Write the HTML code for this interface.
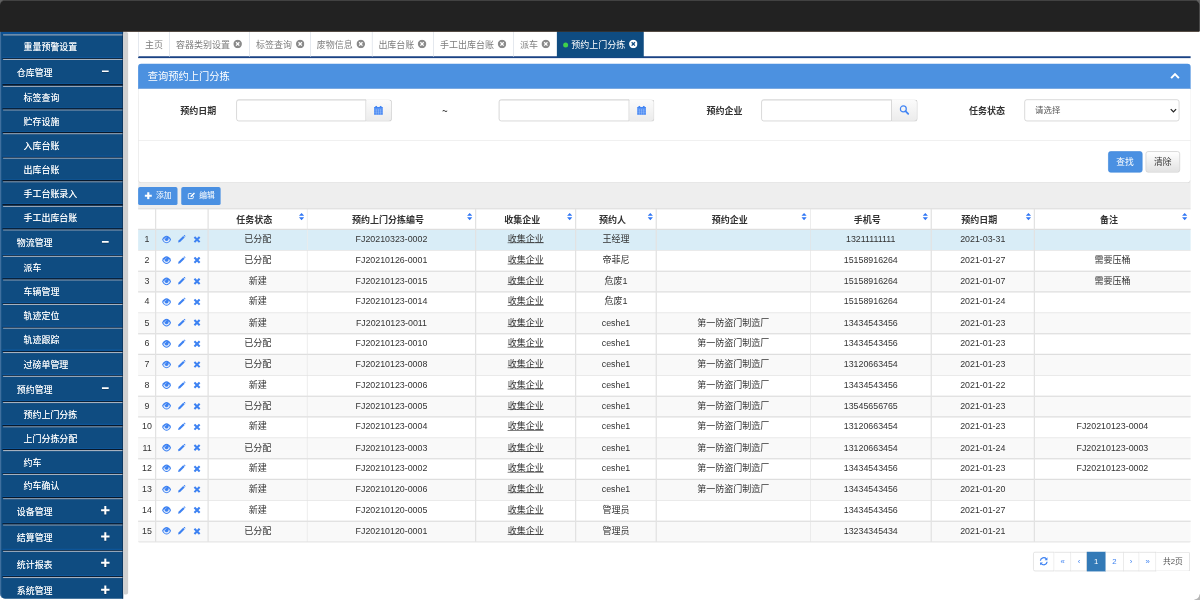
<!DOCTYPE html>
<html lang="zh-CN">
<head>
<meta charset="utf-8">
<title>预约上门分拣</title>
<style>
html,body{margin:0;padding:0;background:#fff;overflow:hidden;width:1200px;height:600px}
#app{position:absolute;left:0;top:0;width:1920px;height:960px;transform:scale(.625);transform-origin:0 0;overflow:hidden;
 font-family:"Liberation Sans","Noto Sans CJK SC",sans-serif;font-size:14px;color:#333;line-height:20px;background:#fff}
#app *{box-sizing:border-box}
svg{display:block}
i{font-style:normal;display:inline-block}
.navbg{z-index:4;position:absolute;left:0;top:0;width:1920px;height:50.4px;background:#626262}
.nav{z-index:5;position:absolute;left:0;top:0;width:1918.5px;height:50.72px;background:#222;border-top:1.6px solid #484848;border-bottom:1px solid #2a1708;border-radius:8px 8px 0 0}
.side{position:absolute;left:0;top:0;width:196.64px;height:958.08px;background:#0f4c81;border-left:2px solid #3f6f9e;border-radius:0 0 0 8px}
.sedge{position:absolute;left:195.52px;top:50.72px;width:1.28px;height:907.36px;background:#0a2748}
.side:before{content:"";position:absolute;left:0;top:50.72px;width:100%;height:4.16px;background:#0d5296}
.sbar{position:absolute;left:196.8px;top:51.2px;width:8.0px;height:900.16px;background:#d0d0d0;border-radius:3px}
.si:before{content:"";position:absolute;left:1px;right:0;top:0;height:2px;background:linear-gradient(#a6b1bf 70%,#5c7d9e)}
.si+.si:after{content:"";position:absolute;left:0;right:0;top:-3.2px;height:3.2px;background:linear-gradient(#0d5598 0,#0d5598 45%,#07182c 55%,#07182c 100%)}
.si{position:absolute;left:2px;right:0;color:#fff;white-space:nowrap;font-size:14.3px;text-shadow:0 0 1px rgba(255,255,255,.7)}
.si.sub{padding-left:33.8px}
.si.hdr{padding-left:22.88px}
.sic{position:absolute;right:20.34px;top:50%;margin-top:-8.7px;width:15px;height:15px;filter:drop-shadow(0 1px 0 rgba(0,0,0,.35));display:flex;align-items:center;justify-content:center}
.tabs{position:absolute;left:221.28px;top:50.4px;width:1683.68px;height:43.04px;border-bottom:3px solid #1b4384}
.tab{position:absolute;top:50.4px;height:40.16px;border-left:1.3px solid #d4dae4;color:#7e7e7e;line-height:43.24px;padding-left:9.7px;white-space:nowrap;font-size:14.4px}
.tab.active{background:#0f4c81;color:#fff;border-left:none;height:41.44px}
.tab .cl{vertical-align:middle;margin-left:5.5px;position:relative;top:-2.5px}
.tab .dot{width:8px;height:8px;border-radius:50%;background:#3fd14a;vertical-align:middle;margin-right:5px;position:relative;top:-1px}
.tab.active{padding-left:10px}
.ph{position:absolute;left:221.28px;top:102.4px;width:1683.68px;height:40.48px;background:#4c91e0;border-radius:5px 5px 0 0;color:#fff;font-size:16.4px;line-height:40.68px;padding-left:15.2px;border-bottom:2px solid #3b7fd0}
.ph i{position:absolute;right:16.8px;top:13px}
.pb{position:absolute;left:221.28px;top:141.76px;width:1683.68px;height:151.04px;border:1.6px solid #ddd;border-bottom-color:#d2d2d2;border-top:none;background:#fff;border-radius:0 0 6px 6px;z-index:2}
.pf,.lab,.inp,.iad,.select,.btn{z-index:3}
.pf{position:absolute;left:221.28px;top:224.48px;width:1683.68px;height:1px;background:#e7e7e7}
.lab{position:absolute;top:159.72px;height:34.88px;line-height:34.88px;font-weight:bold;text-align:right;white-space:nowrap;font-size:14.4px}
.inp{position:absolute;top:158.72px;height:34.88px;border:1.4px solid #c4c4c4;border-radius:4px 0 0 4px;background:#fff;box-shadow:inset 0 1px 1px rgba(0,0,0,.075)}
.iad{position:absolute;top:158.72px;height:34.88px;width:40.32px;border:1.4px solid #c4c4c4;border-left:none;border-radius:0 5px 5px 0;background:linear-gradient(#fbfbfb,#ececec);box-shadow:0 1px 1px rgba(0,0,0,.08);display:flex;align-items:center;justify-content:center}
.sel{}
.select{position:absolute;top:158.72px;height:34.88px;border:1.4px solid #c4c4c4;border-radius:4px;background:#fff;line-height:32.88px;padding-left:16px;color:#555;font-size:13.5px}
.select i{position:absolute;right:3px;top:13px}
.btn{position:absolute;border-radius:4px;text-align:center;white-space:nowrap}
.bp{background:#4a90e2;color:#fff;border:1px solid #3f86da}
.bd{background:linear-gradient(#fff,#e2e2e2);color:#333;border:1.3px solid #c6c6c6}
.tool{position:absolute;left:221.28px;top:288.0px;width:1683.68px;height:45.28px;background:#eee}
.bs{font-size:12.4px;color:#fff;background:#4a90e2;border-radius:3px;height:28.96px;line-height:28.96px;top:298.72px;display:flex;align-items:center;justify-content:center}
.bs i{margin-right:6px}
table{position:absolute;left:221.28px;top:333.28px;width:1683.68px;border-collapse:collapse;table-layout:fixed}
th,td{height:33.34px;padding:0;border:none;text-align:center;vertical-align:middle;white-space:nowrap;overflow:hidden;line-height:20px;font-size:14px}
th{font-weight:bold;position:relative;font-size:14.4px;padding-right:11px;padding-top:2px}
.gl{position:absolute;background:#dedede}
.gv{background:#e2e2e2}
.gb{background:#e6e6e6;border-radius:0 0 4px 4px}
td{padding-bottom:1.6px;font-size:14.15px}
td.c{font-size:14.45px}
tr.odd td{background:#f9f9f9}
tr.sel td{background:#d9edf7}
.srt{position:absolute;right:5px;top:7px}
td.act{position:relative}
td.act i{position:absolute;top:50%}
.a1{left:9.780000000000001px;margin-top:-7.4px}
.a2{left:35.1px;margin-top:-6.8px}
.a3{left:59.989999999999995px;margin-top:-6.2px}
u{text-decoration:underline;text-decoration-thickness:1px;text-underline-offset:0.5px}
.pg{position:absolute;top:883.2px;height:30.4px;border:1.4px solid #d6d6d6;margin-left:0;color:#3d82f2;font-size:12.4px;line-height:28.4px;text-align:center;background:#fff;display:flex;align-items:center;justify-content:center}
.pg+.pg{border-left:none}
.pg.first{border-radius:3px 0 0 3px}
.pg.last{border-radius:0 3px 3px 0}
.pg.on{background:#337ab7;border-color:#337ab7;color:#fff}
.pg.tot{color:#555}
.corner{position:absolute;right:0;bottom:0;width:9px;height:9px;background:#b5b5b5}
.corner:after{content:"";position:absolute;right:1.5px;bottom:1.5px;width:12px;height:12px;background:#fff;border-radius:0 0 8px 0}
</style>
</head>
<body>
<div id="app">
<div class="navbg"></div><div class="nav"></div>
<div class="side">
<div class="si sub" style="top:54.88px;height:39.52px;line-height:41.62px">重量预警设置</div>
<div class="si hdr" style="top:94.4px;height:42.13px;line-height:45.23px">仓库管理<span class="sic"><svg width="13" height="12" viewBox="0 0 12 12" style=""><path d="M0.6 6 H11.4" stroke="#fff" stroke-width="2.6" fill="none"/></svg></span></div>
<div class="si sub" style="top:136.53px;height:38.4px;line-height:40.5px">标签查询</div>
<div class="si sub" style="top:174.93px;height:38.4px;line-height:40.5px">贮存设施</div>
<div class="si sub" style="top:213.33px;height:38.4px;line-height:40.5px">入库台账</div>
<div class="si sub" style="top:251.73px;height:38.4px;line-height:40.5px">出库台账</div>
<div class="si sub" style="top:290.13px;height:38.4px;line-height:40.5px">手工台账录入</div>
<div class="si sub" style="top:328.53px;height:38.4px;line-height:40.5px">手工出库台账</div>
<div class="si hdr" style="top:366.93px;height:42.13px;line-height:45.23px">物流管理<span class="sic"><svg width="13" height="12" viewBox="0 0 12 12" style=""><path d="M0.6 6 H11.4" stroke="#fff" stroke-width="2.6" fill="none"/></svg></span></div>
<div class="si sub" style="top:409.06px;height:38.4px;line-height:40.5px">派车</div>
<div class="si sub" style="top:447.46px;height:38.4px;line-height:40.5px">车辆管理</div>
<div class="si sub" style="top:485.86px;height:38.4px;line-height:40.5px">轨迹定位</div>
<div class="si sub" style="top:524.26px;height:38.4px;line-height:40.5px">轨迹跟踪</div>
<div class="si sub" style="top:562.66px;height:38.4px;line-height:40.5px">过磅单管理</div>
<div class="si hdr" style="top:601.06px;height:42.13px;line-height:45.23px">预约管理<span class="sic"><svg width="13" height="12" viewBox="0 0 12 12" style=""><path d="M0.6 6 H11.4" stroke="#fff" stroke-width="2.6" fill="none"/></svg></span></div>
<div class="si sub" style="top:643.18px;height:38.4px;line-height:40.5px">预约上门分拣</div>
<div class="si sub" style="top:681.58px;height:38.4px;line-height:40.5px">上门分拣分配</div>
<div class="si sub" style="top:719.98px;height:38.4px;line-height:40.5px">约车</div>
<div class="si sub" style="top:758.38px;height:38.4px;line-height:40.5px">约车确认</div>
<div class="si hdr" style="top:796.78px;height:42.13px;line-height:45.23px">设备管理<span class="sic"><svg width="15" height="15" viewBox="0 0 12 12" style=""><path d="M6 0.6 V11.4 M0.6 6 H11.4" stroke="#fff" stroke-width="2.6" fill="none"/></svg></span></div>
<div class="si hdr" style="top:838.91px;height:42.13px;line-height:45.23px">结算管理<span class="sic"><svg width="15" height="15" viewBox="0 0 12 12" style=""><path d="M6 0.6 V11.4 M0.6 6 H11.4" stroke="#fff" stroke-width="2.6" fill="none"/></svg></span></div>
<div class="si hdr" style="top:881.04px;height:42.13px;line-height:45.23px">统计报表<span class="sic"><svg width="15" height="15" viewBox="0 0 12 12" style=""><path d="M6 0.6 V11.4 M0.6 6 H11.4" stroke="#fff" stroke-width="2.6" fill="none"/></svg></span></div>
<div class="si hdr" style="top:923.17px;height:42.13px;line-height:45.23px">系统管理<span class="sic"><svg width="15" height="15" viewBox="0 0 12 12" style=""><path d="M6 0.6 V11.4 M0.6 6 H11.4" stroke="#fff" stroke-width="2.6" fill="none"/></svg></span></div>
</div>
<div class="sedge"></div><div class="sbar"></div>
<div class="tabs"></div>
<div class="tab" style="left:221.28px;width:49.6px"><span>主页</span></div>
<div class="tab" style="left:270.88px;width:128.0px"><span>容器类别设置</span><i class="cl"><svg width="14.6" height="14.6" viewBox="0 0 16 16" style=""><circle cx="8" cy="8" r="7.4" fill="#8a8a8a"/><path d="M5.1 5.1 L10.9 10.9 M10.9 5.1 L5.1 10.9" stroke="#fff" stroke-width="2.3" stroke-linecap="butt" fill="none"/></svg></i></div>
<div class="tab" style="left:398.88px;width:97.12px"><span>标签查询</span><i class="cl"><svg width="14.6" height="14.6" viewBox="0 0 16 16" style=""><circle cx="8" cy="8" r="7.4" fill="#8a8a8a"/><path d="M5.1 5.1 L10.9 10.9 M10.9 5.1 L5.1 10.9" stroke="#fff" stroke-width="2.3" stroke-linecap="butt" fill="none"/></svg></i></div>
<div class="tab" style="left:496.0px;width:98.72px"><span>废物信息</span><i class="cl"><svg width="14.6" height="14.6" viewBox="0 0 16 16" style=""><circle cx="8" cy="8" r="7.4" fill="#8a8a8a"/><path d="M5.1 5.1 L10.9 10.9 M10.9 5.1 L5.1 10.9" stroke="#fff" stroke-width="2.3" stroke-linecap="butt" fill="none"/></svg></i></div>
<div class="tab" style="left:594.72px;width:98.56px"><span>出库台账</span><i class="cl"><svg width="14.6" height="14.6" viewBox="0 0 16 16" style=""><circle cx="8" cy="8" r="7.4" fill="#8a8a8a"/><path d="M5.1 5.1 L10.9 10.9 M10.9 5.1 L5.1 10.9" stroke="#fff" stroke-width="2.3" stroke-linecap="butt" fill="none"/></svg></i></div>
<div class="tab" style="left:693.28px;width:128.0px"><span>手工出库台账</span><i class="cl"><svg width="14.6" height="14.6" viewBox="0 0 16 16" style=""><circle cx="8" cy="8" r="7.4" fill="#8a8a8a"/><path d="M5.1 5.1 L10.9 10.9 M10.9 5.1 L5.1 10.9" stroke="#fff" stroke-width="2.3" stroke-linecap="butt" fill="none"/></svg></i></div>
<div class="tab" style="left:821.28px;width:69.76px"><span>派车</span><i class="cl"><svg width="14.6" height="14.6" viewBox="0 0 16 16" style=""><circle cx="8" cy="8" r="7.4" fill="#8a8a8a"/><path d="M5.1 5.1 L10.9 10.9 M10.9 5.1 L5.1 10.9" stroke="#fff" stroke-width="2.3" stroke-linecap="butt" fill="none"/></svg></i></div>
<div class="tab active" style="left:891.04px;width:138.72px"><i class="dot"></i><span>预约上门分拣</span><i class="cl"><svg width="14.6" height="14.6" viewBox="0 0 16 16" style=""><circle cx="8" cy="8" r="7.4" fill="#fff"/><path d="M5.1 5.1 L10.9 10.9 M10.9 5.1 L5.1 10.9" stroke="#0f4c81" stroke-width="2.3" stroke-linecap="butt" fill="none"/></svg></i></div>
<div class="ph">查询预约上门分拣<i><svg width="16" height="12" viewBox="0 0 16 12" style=""><path d="M1.8 10 L8 3.6 L14.2 10" fill="none" stroke="#fff" stroke-width="3.2" stroke-linejoin="miter"/></svg></i></div>
<div class="pb"></div>
<div class="pf"></div>
<div class="lab" style="left:240.0px;width:106.08px">预约日期</div>
<div class="inp" style="left:377.6px;width:208.64px"></div>
<div class="iad" style="left:586.24px"><svg width="15" height="15" viewBox="0 0 14 14" style=""><path d="M0.5 2.2 h13 v11.3 h-13 Z" fill="#4285f4"/><rect x="2.6" y="0.3" width="2.2" height="3.4" rx="0.8" fill="#4285f4"/><rect x="9.2" y="0.3" width="2.2" height="3.4" rx="0.8" fill="#4285f4"/><path d="M0.5 5 h13 M0.5 7.9 h13 M0.5 10.7 h13 M3.8 5 v8.5 M7 5 v8.5 M10.2 5 v8.5" stroke="#dde9fa" stroke-width="0.55" opacity="0.8" fill="none"/></svg></div>
<div class="lab" style="left:656.96px;width:109.76px;text-align:center">~</div>
<div class="inp" style="left:798.4px;width:208.64px"></div>
<div class="iad" style="left:1007.04px"><svg width="15" height="15" viewBox="0 0 14 14" style=""><path d="M0.5 2.2 h13 v11.3 h-13 Z" fill="#4285f4"/><rect x="2.6" y="0.3" width="2.2" height="3.4" rx="0.8" fill="#4285f4"/><rect x="9.2" y="0.3" width="2.2" height="3.4" rx="0.8" fill="#4285f4"/><path d="M0.5 5 h13 M0.5 7.9 h13 M0.5 10.7 h13 M3.8 5 v8.5 M7 5 v8.5 M10.2 5 v8.5" stroke="#dde9fa" stroke-width="0.55" opacity="0.8" fill="none"/></svg></div>
<div class="lab" style="left:1088.0px;width:100.0px">预约企业</div>
<div class="inp" style="left:1217.92px;width:209.12px"></div>
<div class="iad" style="left:1427.04px;width:40.96px"><svg width="15.5" height="15.5" viewBox="0 0 14 14" style=""><circle cx="5.7" cy="5.7" r="4.3" fill="none" stroke="#4285f4" stroke-width="1.8"/><path d="M8.9 8.9 L12.8 12.8" stroke="#4285f4" stroke-width="2.6" stroke-linecap="round"/></svg></div>
<div class="lab" style="left:1504.0px;width:103.84px">任务状态</div>
<div class="select" style="left:1639.04px;width:248.32px">请选择<i><svg width="11" height="8" viewBox="0 0 11 8" style=""><path d="M1.2 1.6 L5.5 6 L9.8 1.6" fill="none" stroke="#222" stroke-width="2"/></svg></i></div>
<div class="btn bp" style="left:1772.8px;top:241.6px;width:54.72px;height:34.4px;line-height:32.4px">查找</div>
<div class="btn bd" style="left:1832.96px;top:241.6px;width:54.72px;height:34.4px;line-height:32.4px">清除</div>
<div class="tool"></div>
<div class="btn bs" style="left:221.28px;width:62.88px"><i><svg width="12.5" height="12.5" viewBox="0 0 12 12" style=""><path d="M6 0.6 V11.4 M0.6 6 H11.4" stroke="#fff" stroke-width="3.3" fill="none"/></svg></i>添加</div>
<div class="btn bs" style="left:290.4px;width:62.4px"><i><svg width="13" height="12" viewBox="0 0 13 12" style=""><path d="M9.2 6.6 V9.4 Q9.2 10.9 7.7 10.9 H2.6 Q1.1 10.9 1.1 9.4 V4.2 Q1.1 2.7 2.6 2.7 H6.4" fill="none" stroke="#fff" stroke-width="1.5"/><path d="M4.6 8.2 L5 6.3 L10.3 1 L12 2.7 L6.6 8 Z" fill="#fff"/></svg></i>编辑</div>
<table>
<colgroup><col style="width:27.84px"><col style="width:84.16px"><col style="width:158.4px"><col style="width:269.44px"><col style="width:160.0px"><col style="width:128.96px"><col style="width:246.4px"><col style="width:193.6px"><col style="width:164.8px"><col style="width:250.08px"></colgroup>
<thead><tr><th></th><th></th><th>任务状态<i class="srt"><svg width="9" height="13" viewBox="0 0 9 13" style=""><path d="M0.3 5.3 L4.5 0.6 L8.7 5.3 Z M0.3 7.7 L4.5 12.4 L8.7 7.7 Z" fill="#2f76f5"/></svg></i></th><th>预约上门分拣编号<i class="srt"><svg width="9" height="13" viewBox="0 0 9 13" style=""><path d="M0.3 5.3 L4.5 0.6 L8.7 5.3 Z M0.3 7.7 L4.5 12.4 L8.7 7.7 Z" fill="#2f76f5"/></svg></i></th><th>收集企业<i class="srt"><svg width="9" height="13" viewBox="0 0 9 13" style=""><path d="M0.3 5.3 L4.5 0.6 L8.7 5.3 Z M0.3 7.7 L4.5 12.4 L8.7 7.7 Z" fill="#2f76f5"/></svg></i></th><th>预约人<i class="srt"><svg width="9" height="13" viewBox="0 0 9 13" style=""><path d="M0.3 5.3 L4.5 0.6 L8.7 5.3 Z M0.3 7.7 L4.5 12.4 L8.7 7.7 Z" fill="#2f76f5"/></svg></i></th><th>预约企业<i class="srt"><svg width="9" height="13" viewBox="0 0 9 13" style=""><path d="M0.3 5.3 L4.5 0.6 L8.7 5.3 Z M0.3 7.7 L4.5 12.4 L8.7 7.7 Z" fill="#2f76f5"/></svg></i></th><th>手机号<i class="srt"><svg width="9" height="13" viewBox="0 0 9 13" style=""><path d="M0.3 5.3 L4.5 0.6 L8.7 5.3 Z M0.3 7.7 L4.5 12.4 L8.7 7.7 Z" fill="#2f76f5"/></svg></i></th><th>预约日期<i class="srt"><svg width="9" height="13" viewBox="0 0 9 13" style=""><path d="M0.3 5.3 L4.5 0.6 L8.7 5.3 Z M0.3 7.7 L4.5 12.4 L8.7 7.7 Z" fill="#2f76f5"/></svg></i></th><th>备注<i class="srt"><svg width="9" height="13" viewBox="0 0 9 13" style=""><path d="M0.3 5.3 L4.5 0.6 L8.7 5.3 Z M0.3 7.7 L4.5 12.4 L8.7 7.7 Z" fill="#2f76f5"/></svg></i></th></tr></thead>
<tbody>
<tr class="sel"><td class="rn">1</td><td class="act"><i class="a1"><svg width="15" height="14.2" viewBox="0 0 15 13" preserveAspectRatio="none" style=""><path d="M0.3 6.7 C2.2 2.6 5 1 7.5 1 C10 1 12.8 2.6 14.7 6.7 C12.8 10.6 10 12.2 7.5 12.2 C5 12.2 2.2 10.6 0.3 6.7 Z" fill="#3d82f2"/><path d="M2.2 6.9 C3.4 9.4 5.6 10.8 7.5 10.8 C9.4 10.8 11.6 9.4 12.8 6.9 C12.2 5.8 11.5 5 10.7 4.4 C11.3 6.6 9.8 8.9 7.5 8.9 C5.2 8.9 3.7 6.6 4.3 4.4 C3.5 5 2.8 5.8 2.2 6.9 Z" fill="#fff" opacity="0.85"/><path d="M7.3 3.3 C6.3 3.4 5.6 4.2 5.6 5.2" fill="none" stroke="#fff" stroke-width="0.9" opacity="0.85"/></svg></i><i class="a2"><svg width="13" height="13" viewBox="0 0 14 14" style=""><path d="M1 13 L1.8 9.6 L9.8 1.6 L12.4 4.2 L4.4 12.2 Z" fill="#3d82f2"/><path d="M10.6 0.9 L11.4 0.2 Q12 -0.2 12.6 0.4 L13.6 1.4 Q14.2 2 13.7 2.6 L13.1 3.4 Z" fill="#3d82f2"/></svg></i><i class="a3"><svg width="12.5" height="12.5" viewBox="0 0 12 12" style=""><path d="M2 2 L10 10 M10 2 L2 10" stroke="#3d82f2" stroke-width="3.2" stroke-linecap="butt" fill="none"/></svg></i></td><td class="c">已分配</td><td>FJ20210323-0002</td><td class="c"><u>收集企业</u></td><td class="c">王经理</td><td></td><td>13211111111</td><td>2021-03-31</td><td></td></tr>
<tr class=""><td class="rn">2</td><td class="act"><i class="a1"><svg width="15" height="14.2" viewBox="0 0 15 13" preserveAspectRatio="none" style=""><path d="M0.3 6.7 C2.2 2.6 5 1 7.5 1 C10 1 12.8 2.6 14.7 6.7 C12.8 10.6 10 12.2 7.5 12.2 C5 12.2 2.2 10.6 0.3 6.7 Z" fill="#3d82f2"/><path d="M2.2 6.9 C3.4 9.4 5.6 10.8 7.5 10.8 C9.4 10.8 11.6 9.4 12.8 6.9 C12.2 5.8 11.5 5 10.7 4.4 C11.3 6.6 9.8 8.9 7.5 8.9 C5.2 8.9 3.7 6.6 4.3 4.4 C3.5 5 2.8 5.8 2.2 6.9 Z" fill="#fff" opacity="0.85"/><path d="M7.3 3.3 C6.3 3.4 5.6 4.2 5.6 5.2" fill="none" stroke="#fff" stroke-width="0.9" opacity="0.85"/></svg></i><i class="a2"><svg width="13" height="13" viewBox="0 0 14 14" style=""><path d="M1 13 L1.8 9.6 L9.8 1.6 L12.4 4.2 L4.4 12.2 Z" fill="#3d82f2"/><path d="M10.6 0.9 L11.4 0.2 Q12 -0.2 12.6 0.4 L13.6 1.4 Q14.2 2 13.7 2.6 L13.1 3.4 Z" fill="#3d82f2"/></svg></i><i class="a3"><svg width="12.5" height="12.5" viewBox="0 0 12 12" style=""><path d="M2 2 L10 10 M10 2 L2 10" stroke="#3d82f2" stroke-width="3.2" stroke-linecap="butt" fill="none"/></svg></i></td><td class="c">已分配</td><td>FJ20210126-0001</td><td class="c"><u>收集企业</u></td><td class="c">帝菲尼</td><td></td><td>15158916264</td><td>2021-01-27</td><td class="c">需要压桶</td></tr>
<tr class="odd"><td class="rn">3</td><td class="act"><i class="a1"><svg width="15" height="14.2" viewBox="0 0 15 13" preserveAspectRatio="none" style=""><path d="M0.3 6.7 C2.2 2.6 5 1 7.5 1 C10 1 12.8 2.6 14.7 6.7 C12.8 10.6 10 12.2 7.5 12.2 C5 12.2 2.2 10.6 0.3 6.7 Z" fill="#3d82f2"/><path d="M2.2 6.9 C3.4 9.4 5.6 10.8 7.5 10.8 C9.4 10.8 11.6 9.4 12.8 6.9 C12.2 5.8 11.5 5 10.7 4.4 C11.3 6.6 9.8 8.9 7.5 8.9 C5.2 8.9 3.7 6.6 4.3 4.4 C3.5 5 2.8 5.8 2.2 6.9 Z" fill="#fff" opacity="0.85"/><path d="M7.3 3.3 C6.3 3.4 5.6 4.2 5.6 5.2" fill="none" stroke="#fff" stroke-width="0.9" opacity="0.85"/></svg></i><i class="a2"><svg width="13" height="13" viewBox="0 0 14 14" style=""><path d="M1 13 L1.8 9.6 L9.8 1.6 L12.4 4.2 L4.4 12.2 Z" fill="#3d82f2"/><path d="M10.6 0.9 L11.4 0.2 Q12 -0.2 12.6 0.4 L13.6 1.4 Q14.2 2 13.7 2.6 L13.1 3.4 Z" fill="#3d82f2"/></svg></i><i class="a3"><svg width="12.5" height="12.5" viewBox="0 0 12 12" style=""><path d="M2 2 L10 10 M10 2 L2 10" stroke="#3d82f2" stroke-width="3.2" stroke-linecap="butt" fill="none"/></svg></i></td><td class="c">新建</td><td>FJ20210123-0015</td><td class="c"><u>收集企业</u></td><td class="c">危废1</td><td></td><td>15158916264</td><td>2021-01-07</td><td class="c">需要压桶</td></tr>
<tr class=""><td class="rn">4</td><td class="act"><i class="a1"><svg width="15" height="14.2" viewBox="0 0 15 13" preserveAspectRatio="none" style=""><path d="M0.3 6.7 C2.2 2.6 5 1 7.5 1 C10 1 12.8 2.6 14.7 6.7 C12.8 10.6 10 12.2 7.5 12.2 C5 12.2 2.2 10.6 0.3 6.7 Z" fill="#3d82f2"/><path d="M2.2 6.9 C3.4 9.4 5.6 10.8 7.5 10.8 C9.4 10.8 11.6 9.4 12.8 6.9 C12.2 5.8 11.5 5 10.7 4.4 C11.3 6.6 9.8 8.9 7.5 8.9 C5.2 8.9 3.7 6.6 4.3 4.4 C3.5 5 2.8 5.8 2.2 6.9 Z" fill="#fff" opacity="0.85"/><path d="M7.3 3.3 C6.3 3.4 5.6 4.2 5.6 5.2" fill="none" stroke="#fff" stroke-width="0.9" opacity="0.85"/></svg></i><i class="a2"><svg width="13" height="13" viewBox="0 0 14 14" style=""><path d="M1 13 L1.8 9.6 L9.8 1.6 L12.4 4.2 L4.4 12.2 Z" fill="#3d82f2"/><path d="M10.6 0.9 L11.4 0.2 Q12 -0.2 12.6 0.4 L13.6 1.4 Q14.2 2 13.7 2.6 L13.1 3.4 Z" fill="#3d82f2"/></svg></i><i class="a3"><svg width="12.5" height="12.5" viewBox="0 0 12 12" style=""><path d="M2 2 L10 10 M10 2 L2 10" stroke="#3d82f2" stroke-width="3.2" stroke-linecap="butt" fill="none"/></svg></i></td><td class="c">新建</td><td>FJ20210123-0014</td><td class="c"><u>收集企业</u></td><td class="c">危废1</td><td></td><td>15158916264</td><td>2021-01-24</td><td></td></tr>
<tr class="odd"><td class="rn">5</td><td class="act"><i class="a1"><svg width="15" height="14.2" viewBox="0 0 15 13" preserveAspectRatio="none" style=""><path d="M0.3 6.7 C2.2 2.6 5 1 7.5 1 C10 1 12.8 2.6 14.7 6.7 C12.8 10.6 10 12.2 7.5 12.2 C5 12.2 2.2 10.6 0.3 6.7 Z" fill="#3d82f2"/><path d="M2.2 6.9 C3.4 9.4 5.6 10.8 7.5 10.8 C9.4 10.8 11.6 9.4 12.8 6.9 C12.2 5.8 11.5 5 10.7 4.4 C11.3 6.6 9.8 8.9 7.5 8.9 C5.2 8.9 3.7 6.6 4.3 4.4 C3.5 5 2.8 5.8 2.2 6.9 Z" fill="#fff" opacity="0.85"/><path d="M7.3 3.3 C6.3 3.4 5.6 4.2 5.6 5.2" fill="none" stroke="#fff" stroke-width="0.9" opacity="0.85"/></svg></i><i class="a2"><svg width="13" height="13" viewBox="0 0 14 14" style=""><path d="M1 13 L1.8 9.6 L9.8 1.6 L12.4 4.2 L4.4 12.2 Z" fill="#3d82f2"/><path d="M10.6 0.9 L11.4 0.2 Q12 -0.2 12.6 0.4 L13.6 1.4 Q14.2 2 13.7 2.6 L13.1 3.4 Z" fill="#3d82f2"/></svg></i><i class="a3"><svg width="12.5" height="12.5" viewBox="0 0 12 12" style=""><path d="M2 2 L10 10 M10 2 L2 10" stroke="#3d82f2" stroke-width="3.2" stroke-linecap="butt" fill="none"/></svg></i></td><td class="c">新建</td><td>FJ20210123-0011</td><td class="c"><u>收集企业</u></td><td>ceshe1</td><td class="c">第一防盗门制造厂</td><td>13434543456</td><td>2021-01-23</td><td></td></tr>
<tr class=""><td class="rn">6</td><td class="act"><i class="a1"><svg width="15" height="14.2" viewBox="0 0 15 13" preserveAspectRatio="none" style=""><path d="M0.3 6.7 C2.2 2.6 5 1 7.5 1 C10 1 12.8 2.6 14.7 6.7 C12.8 10.6 10 12.2 7.5 12.2 C5 12.2 2.2 10.6 0.3 6.7 Z" fill="#3d82f2"/><path d="M2.2 6.9 C3.4 9.4 5.6 10.8 7.5 10.8 C9.4 10.8 11.6 9.4 12.8 6.9 C12.2 5.8 11.5 5 10.7 4.4 C11.3 6.6 9.8 8.9 7.5 8.9 C5.2 8.9 3.7 6.6 4.3 4.4 C3.5 5 2.8 5.8 2.2 6.9 Z" fill="#fff" opacity="0.85"/><path d="M7.3 3.3 C6.3 3.4 5.6 4.2 5.6 5.2" fill="none" stroke="#fff" stroke-width="0.9" opacity="0.85"/></svg></i><i class="a2"><svg width="13" height="13" viewBox="0 0 14 14" style=""><path d="M1 13 L1.8 9.6 L9.8 1.6 L12.4 4.2 L4.4 12.2 Z" fill="#3d82f2"/><path d="M10.6 0.9 L11.4 0.2 Q12 -0.2 12.6 0.4 L13.6 1.4 Q14.2 2 13.7 2.6 L13.1 3.4 Z" fill="#3d82f2"/></svg></i><i class="a3"><svg width="12.5" height="12.5" viewBox="0 0 12 12" style=""><path d="M2 2 L10 10 M10 2 L2 10" stroke="#3d82f2" stroke-width="3.2" stroke-linecap="butt" fill="none"/></svg></i></td><td class="c">已分配</td><td>FJ20210123-0010</td><td class="c"><u>收集企业</u></td><td>ceshe1</td><td class="c">第一防盗门制造厂</td><td>13434543456</td><td>2021-01-23</td><td></td></tr>
<tr class="odd"><td class="rn">7</td><td class="act"><i class="a1"><svg width="15" height="14.2" viewBox="0 0 15 13" preserveAspectRatio="none" style=""><path d="M0.3 6.7 C2.2 2.6 5 1 7.5 1 C10 1 12.8 2.6 14.7 6.7 C12.8 10.6 10 12.2 7.5 12.2 C5 12.2 2.2 10.6 0.3 6.7 Z" fill="#3d82f2"/><path d="M2.2 6.9 C3.4 9.4 5.6 10.8 7.5 10.8 C9.4 10.8 11.6 9.4 12.8 6.9 C12.2 5.8 11.5 5 10.7 4.4 C11.3 6.6 9.8 8.9 7.5 8.9 C5.2 8.9 3.7 6.6 4.3 4.4 C3.5 5 2.8 5.8 2.2 6.9 Z" fill="#fff" opacity="0.85"/><path d="M7.3 3.3 C6.3 3.4 5.6 4.2 5.6 5.2" fill="none" stroke="#fff" stroke-width="0.9" opacity="0.85"/></svg></i><i class="a2"><svg width="13" height="13" viewBox="0 0 14 14" style=""><path d="M1 13 L1.8 9.6 L9.8 1.6 L12.4 4.2 L4.4 12.2 Z" fill="#3d82f2"/><path d="M10.6 0.9 L11.4 0.2 Q12 -0.2 12.6 0.4 L13.6 1.4 Q14.2 2 13.7 2.6 L13.1 3.4 Z" fill="#3d82f2"/></svg></i><i class="a3"><svg width="12.5" height="12.5" viewBox="0 0 12 12" style=""><path d="M2 2 L10 10 M10 2 L2 10" stroke="#3d82f2" stroke-width="3.2" stroke-linecap="butt" fill="none"/></svg></i></td><td class="c">已分配</td><td>FJ20210123-0008</td><td class="c"><u>收集企业</u></td><td>ceshe1</td><td class="c">第一防盗门制造厂</td><td>13120663454</td><td>2021-01-23</td><td></td></tr>
<tr class=""><td class="rn">8</td><td class="act"><i class="a1"><svg width="15" height="14.2" viewBox="0 0 15 13" preserveAspectRatio="none" style=""><path d="M0.3 6.7 C2.2 2.6 5 1 7.5 1 C10 1 12.8 2.6 14.7 6.7 C12.8 10.6 10 12.2 7.5 12.2 C5 12.2 2.2 10.6 0.3 6.7 Z" fill="#3d82f2"/><path d="M2.2 6.9 C3.4 9.4 5.6 10.8 7.5 10.8 C9.4 10.8 11.6 9.4 12.8 6.9 C12.2 5.8 11.5 5 10.7 4.4 C11.3 6.6 9.8 8.9 7.5 8.9 C5.2 8.9 3.7 6.6 4.3 4.4 C3.5 5 2.8 5.8 2.2 6.9 Z" fill="#fff" opacity="0.85"/><path d="M7.3 3.3 C6.3 3.4 5.6 4.2 5.6 5.2" fill="none" stroke="#fff" stroke-width="0.9" opacity="0.85"/></svg></i><i class="a2"><svg width="13" height="13" viewBox="0 0 14 14" style=""><path d="M1 13 L1.8 9.6 L9.8 1.6 L12.4 4.2 L4.4 12.2 Z" fill="#3d82f2"/><path d="M10.6 0.9 L11.4 0.2 Q12 -0.2 12.6 0.4 L13.6 1.4 Q14.2 2 13.7 2.6 L13.1 3.4 Z" fill="#3d82f2"/></svg></i><i class="a3"><svg width="12.5" height="12.5" viewBox="0 0 12 12" style=""><path d="M2 2 L10 10 M10 2 L2 10" stroke="#3d82f2" stroke-width="3.2" stroke-linecap="butt" fill="none"/></svg></i></td><td class="c">新建</td><td>FJ20210123-0006</td><td class="c"><u>收集企业</u></td><td>ceshe1</td><td class="c">第一防盗门制造厂</td><td>13434543456</td><td>2021-01-22</td><td></td></tr>
<tr class="odd"><td class="rn">9</td><td class="act"><i class="a1"><svg width="15" height="14.2" viewBox="0 0 15 13" preserveAspectRatio="none" style=""><path d="M0.3 6.7 C2.2 2.6 5 1 7.5 1 C10 1 12.8 2.6 14.7 6.7 C12.8 10.6 10 12.2 7.5 12.2 C5 12.2 2.2 10.6 0.3 6.7 Z" fill="#3d82f2"/><path d="M2.2 6.9 C3.4 9.4 5.6 10.8 7.5 10.8 C9.4 10.8 11.6 9.4 12.8 6.9 C12.2 5.8 11.5 5 10.7 4.4 C11.3 6.6 9.8 8.9 7.5 8.9 C5.2 8.9 3.7 6.6 4.3 4.4 C3.5 5 2.8 5.8 2.2 6.9 Z" fill="#fff" opacity="0.85"/><path d="M7.3 3.3 C6.3 3.4 5.6 4.2 5.6 5.2" fill="none" stroke="#fff" stroke-width="0.9" opacity="0.85"/></svg></i><i class="a2"><svg width="13" height="13" viewBox="0 0 14 14" style=""><path d="M1 13 L1.8 9.6 L9.8 1.6 L12.4 4.2 L4.4 12.2 Z" fill="#3d82f2"/><path d="M10.6 0.9 L11.4 0.2 Q12 -0.2 12.6 0.4 L13.6 1.4 Q14.2 2 13.7 2.6 L13.1 3.4 Z" fill="#3d82f2"/></svg></i><i class="a3"><svg width="12.5" height="12.5" viewBox="0 0 12 12" style=""><path d="M2 2 L10 10 M10 2 L2 10" stroke="#3d82f2" stroke-width="3.2" stroke-linecap="butt" fill="none"/></svg></i></td><td class="c">已分配</td><td>FJ20210123-0005</td><td class="c"><u>收集企业</u></td><td>ceshe1</td><td class="c">第一防盗门制造厂</td><td>13545656765</td><td>2021-01-23</td><td></td></tr>
<tr class=""><td class="rn">10</td><td class="act"><i class="a1"><svg width="15" height="14.2" viewBox="0 0 15 13" preserveAspectRatio="none" style=""><path d="M0.3 6.7 C2.2 2.6 5 1 7.5 1 C10 1 12.8 2.6 14.7 6.7 C12.8 10.6 10 12.2 7.5 12.2 C5 12.2 2.2 10.6 0.3 6.7 Z" fill="#3d82f2"/><path d="M2.2 6.9 C3.4 9.4 5.6 10.8 7.5 10.8 C9.4 10.8 11.6 9.4 12.8 6.9 C12.2 5.8 11.5 5 10.7 4.4 C11.3 6.6 9.8 8.9 7.5 8.9 C5.2 8.9 3.7 6.6 4.3 4.4 C3.5 5 2.8 5.8 2.2 6.9 Z" fill="#fff" opacity="0.85"/><path d="M7.3 3.3 C6.3 3.4 5.6 4.2 5.6 5.2" fill="none" stroke="#fff" stroke-width="0.9" opacity="0.85"/></svg></i><i class="a2"><svg width="13" height="13" viewBox="0 0 14 14" style=""><path d="M1 13 L1.8 9.6 L9.8 1.6 L12.4 4.2 L4.4 12.2 Z" fill="#3d82f2"/><path d="M10.6 0.9 L11.4 0.2 Q12 -0.2 12.6 0.4 L13.6 1.4 Q14.2 2 13.7 2.6 L13.1 3.4 Z" fill="#3d82f2"/></svg></i><i class="a3"><svg width="12.5" height="12.5" viewBox="0 0 12 12" style=""><path d="M2 2 L10 10 M10 2 L2 10" stroke="#3d82f2" stroke-width="3.2" stroke-linecap="butt" fill="none"/></svg></i></td><td class="c">新建</td><td>FJ20210123-0004</td><td class="c"><u>收集企业</u></td><td>ceshe1</td><td class="c">第一防盗门制造厂</td><td>13120663454</td><td>2021-01-23</td><td>FJ20210123-0004</td></tr>
<tr class="odd"><td class="rn">11</td><td class="act"><i class="a1"><svg width="15" height="14.2" viewBox="0 0 15 13" preserveAspectRatio="none" style=""><path d="M0.3 6.7 C2.2 2.6 5 1 7.5 1 C10 1 12.8 2.6 14.7 6.7 C12.8 10.6 10 12.2 7.5 12.2 C5 12.2 2.2 10.6 0.3 6.7 Z" fill="#3d82f2"/><path d="M2.2 6.9 C3.4 9.4 5.6 10.8 7.5 10.8 C9.4 10.8 11.6 9.4 12.8 6.9 C12.2 5.8 11.5 5 10.7 4.4 C11.3 6.6 9.8 8.9 7.5 8.9 C5.2 8.9 3.7 6.6 4.3 4.4 C3.5 5 2.8 5.8 2.2 6.9 Z" fill="#fff" opacity="0.85"/><path d="M7.3 3.3 C6.3 3.4 5.6 4.2 5.6 5.2" fill="none" stroke="#fff" stroke-width="0.9" opacity="0.85"/></svg></i><i class="a2"><svg width="13" height="13" viewBox="0 0 14 14" style=""><path d="M1 13 L1.8 9.6 L9.8 1.6 L12.4 4.2 L4.4 12.2 Z" fill="#3d82f2"/><path d="M10.6 0.9 L11.4 0.2 Q12 -0.2 12.6 0.4 L13.6 1.4 Q14.2 2 13.7 2.6 L13.1 3.4 Z" fill="#3d82f2"/></svg></i><i class="a3"><svg width="12.5" height="12.5" viewBox="0 0 12 12" style=""><path d="M2 2 L10 10 M10 2 L2 10" stroke="#3d82f2" stroke-width="3.2" stroke-linecap="butt" fill="none"/></svg></i></td><td class="c">已分配</td><td>FJ20210123-0003</td><td class="c"><u>收集企业</u></td><td>ceshe1</td><td class="c">第一防盗门制造厂</td><td>13120663454</td><td>2021-01-24</td><td>FJ20210123-0003</td></tr>
<tr class=""><td class="rn">12</td><td class="act"><i class="a1"><svg width="15" height="14.2" viewBox="0 0 15 13" preserveAspectRatio="none" style=""><path d="M0.3 6.7 C2.2 2.6 5 1 7.5 1 C10 1 12.8 2.6 14.7 6.7 C12.8 10.6 10 12.2 7.5 12.2 C5 12.2 2.2 10.6 0.3 6.7 Z" fill="#3d82f2"/><path d="M2.2 6.9 C3.4 9.4 5.6 10.8 7.5 10.8 C9.4 10.8 11.6 9.4 12.8 6.9 C12.2 5.8 11.5 5 10.7 4.4 C11.3 6.6 9.8 8.9 7.5 8.9 C5.2 8.9 3.7 6.6 4.3 4.4 C3.5 5 2.8 5.8 2.2 6.9 Z" fill="#fff" opacity="0.85"/><path d="M7.3 3.3 C6.3 3.4 5.6 4.2 5.6 5.2" fill="none" stroke="#fff" stroke-width="0.9" opacity="0.85"/></svg></i><i class="a2"><svg width="13" height="13" viewBox="0 0 14 14" style=""><path d="M1 13 L1.8 9.6 L9.8 1.6 L12.4 4.2 L4.4 12.2 Z" fill="#3d82f2"/><path d="M10.6 0.9 L11.4 0.2 Q12 -0.2 12.6 0.4 L13.6 1.4 Q14.2 2 13.7 2.6 L13.1 3.4 Z" fill="#3d82f2"/></svg></i><i class="a3"><svg width="12.5" height="12.5" viewBox="0 0 12 12" style=""><path d="M2 2 L10 10 M10 2 L2 10" stroke="#3d82f2" stroke-width="3.2" stroke-linecap="butt" fill="none"/></svg></i></td><td class="c">新建</td><td>FJ20210123-0002</td><td class="c"><u>收集企业</u></td><td>ceshe1</td><td class="c">第一防盗门制造厂</td><td>13434543456</td><td>2021-01-23</td><td>FJ20210123-0002</td></tr>
<tr class="odd"><td class="rn">13</td><td class="act"><i class="a1"><svg width="15" height="14.2" viewBox="0 0 15 13" preserveAspectRatio="none" style=""><path d="M0.3 6.7 C2.2 2.6 5 1 7.5 1 C10 1 12.8 2.6 14.7 6.7 C12.8 10.6 10 12.2 7.5 12.2 C5 12.2 2.2 10.6 0.3 6.7 Z" fill="#3d82f2"/><path d="M2.2 6.9 C3.4 9.4 5.6 10.8 7.5 10.8 C9.4 10.8 11.6 9.4 12.8 6.9 C12.2 5.8 11.5 5 10.7 4.4 C11.3 6.6 9.8 8.9 7.5 8.9 C5.2 8.9 3.7 6.6 4.3 4.4 C3.5 5 2.8 5.8 2.2 6.9 Z" fill="#fff" opacity="0.85"/><path d="M7.3 3.3 C6.3 3.4 5.6 4.2 5.6 5.2" fill="none" stroke="#fff" stroke-width="0.9" opacity="0.85"/></svg></i><i class="a2"><svg width="13" height="13" viewBox="0 0 14 14" style=""><path d="M1 13 L1.8 9.6 L9.8 1.6 L12.4 4.2 L4.4 12.2 Z" fill="#3d82f2"/><path d="M10.6 0.9 L11.4 0.2 Q12 -0.2 12.6 0.4 L13.6 1.4 Q14.2 2 13.7 2.6 L13.1 3.4 Z" fill="#3d82f2"/></svg></i><i class="a3"><svg width="12.5" height="12.5" viewBox="0 0 12 12" style=""><path d="M2 2 L10 10 M10 2 L2 10" stroke="#3d82f2" stroke-width="3.2" stroke-linecap="butt" fill="none"/></svg></i></td><td class="c">新建</td><td>FJ20210120-0006</td><td class="c"><u>收集企业</u></td><td>ceshe1</td><td class="c">第一防盗门制造厂</td><td>13434543456</td><td>2021-01-20</td><td></td></tr>
<tr class=""><td class="rn">14</td><td class="act"><i class="a1"><svg width="15" height="14.2" viewBox="0 0 15 13" preserveAspectRatio="none" style=""><path d="M0.3 6.7 C2.2 2.6 5 1 7.5 1 C10 1 12.8 2.6 14.7 6.7 C12.8 10.6 10 12.2 7.5 12.2 C5 12.2 2.2 10.6 0.3 6.7 Z" fill="#3d82f2"/><path d="M2.2 6.9 C3.4 9.4 5.6 10.8 7.5 10.8 C9.4 10.8 11.6 9.4 12.8 6.9 C12.2 5.8 11.5 5 10.7 4.4 C11.3 6.6 9.8 8.9 7.5 8.9 C5.2 8.9 3.7 6.6 4.3 4.4 C3.5 5 2.8 5.8 2.2 6.9 Z" fill="#fff" opacity="0.85"/><path d="M7.3 3.3 C6.3 3.4 5.6 4.2 5.6 5.2" fill="none" stroke="#fff" stroke-width="0.9" opacity="0.85"/></svg></i><i class="a2"><svg width="13" height="13" viewBox="0 0 14 14" style=""><path d="M1 13 L1.8 9.6 L9.8 1.6 L12.4 4.2 L4.4 12.2 Z" fill="#3d82f2"/><path d="M10.6 0.9 L11.4 0.2 Q12 -0.2 12.6 0.4 L13.6 1.4 Q14.2 2 13.7 2.6 L13.1 3.4 Z" fill="#3d82f2"/></svg></i><i class="a3"><svg width="12.5" height="12.5" viewBox="0 0 12 12" style=""><path d="M2 2 L10 10 M10 2 L2 10" stroke="#3d82f2" stroke-width="3.2" stroke-linecap="butt" fill="none"/></svg></i></td><td class="c">新建</td><td>FJ20210120-0005</td><td class="c"><u>收集企业</u></td><td class="c">管理员</td><td></td><td>13434543456</td><td>2021-01-27</td><td></td></tr>
<tr class="odd"><td class="rn">15</td><td class="act"><i class="a1"><svg width="15" height="14.2" viewBox="0 0 15 13" preserveAspectRatio="none" style=""><path d="M0.3 6.7 C2.2 2.6 5 1 7.5 1 C10 1 12.8 2.6 14.7 6.7 C12.8 10.6 10 12.2 7.5 12.2 C5 12.2 2.2 10.6 0.3 6.7 Z" fill="#3d82f2"/><path d="M2.2 6.9 C3.4 9.4 5.6 10.8 7.5 10.8 C9.4 10.8 11.6 9.4 12.8 6.9 C12.2 5.8 11.5 5 10.7 4.4 C11.3 6.6 9.8 8.9 7.5 8.9 C5.2 8.9 3.7 6.6 4.3 4.4 C3.5 5 2.8 5.8 2.2 6.9 Z" fill="#fff" opacity="0.85"/><path d="M7.3 3.3 C6.3 3.4 5.6 4.2 5.6 5.2" fill="none" stroke="#fff" stroke-width="0.9" opacity="0.85"/></svg></i><i class="a2"><svg width="13" height="13" viewBox="0 0 14 14" style=""><path d="M1 13 L1.8 9.6 L9.8 1.6 L12.4 4.2 L4.4 12.2 Z" fill="#3d82f2"/><path d="M10.6 0.9 L11.4 0.2 Q12 -0.2 12.6 0.4 L13.6 1.4 Q14.2 2 13.7 2.6 L13.1 3.4 Z" fill="#3d82f2"/></svg></i><i class="a3"><svg width="12.5" height="12.5" viewBox="0 0 12 12" style=""><path d="M2 2 L10 10 M10 2 L2 10" stroke="#3d82f2" stroke-width="3.2" stroke-linecap="butt" fill="none"/></svg></i></td><td class="c">已分配</td><td>FJ20210120-0001</td><td class="c"><u>收集企业</u></td><td class="c">管理员</td><td></td><td>13234345434</td><td>2021-01-21</td><td></td></tr>
</tbody>
</table>
<div class="gl" style="left:221.28px;top:332.98px;width:1683.68px;height:1.6px"></div>
<div class="gl" style="left:221.28px;top:366.32px;width:1683.68px;height:1.6px"></div>
<div class="gl" style="left:221.28px;top:399.66px;width:1683.68px;height:1.6px"></div>
<div class="gl" style="left:221.28px;top:433.0px;width:1683.68px;height:1.6px"></div>
<div class="gl" style="left:221.28px;top:466.34px;width:1683.68px;height:1.6px"></div>
<div class="gl" style="left:221.28px;top:499.68px;width:1683.68px;height:1.6px"></div>
<div class="gl" style="left:221.28px;top:533.02px;width:1683.68px;height:1.6px"></div>
<div class="gl" style="left:221.28px;top:566.36px;width:1683.68px;height:1.6px"></div>
<div class="gl" style="left:221.28px;top:599.7px;width:1683.68px;height:1.6px"></div>
<div class="gl" style="left:221.28px;top:633.04px;width:1683.68px;height:1.6px"></div>
<div class="gl" style="left:221.28px;top:666.38px;width:1683.68px;height:1.6px"></div>
<div class="gl" style="left:221.28px;top:699.72px;width:1683.68px;height:1.6px"></div>
<div class="gl" style="left:221.28px;top:733.06px;width:1683.68px;height:1.6px"></div>
<div class="gl" style="left:221.28px;top:766.4px;width:1683.68px;height:1.6px"></div>
<div class="gl" style="left:221.28px;top:799.74px;width:1683.68px;height:1.6px"></div>
<div class="gl" style="left:221.28px;top:833.08px;width:1683.68px;height:1.6px"></div>
<div class="gl gb" style="left:221.28px;top:866.42px;width:1683.68px;height:1.6px"></div>
<div class="gl gv" style="left:248.32px;top:333.28px;width:1.6px;height:533.44px"></div>
<div class="gl gv" style="left:332.48px;top:333.28px;width:1.6px;height:533.44px"></div>
<div class="gl gv" style="left:490.88px;top:333.28px;width:1.6px;height:533.44px"></div>
<div class="gl gv" style="left:760.32px;top:333.28px;width:1.6px;height:533.44px"></div>
<div class="gl gv" style="left:920.32px;top:333.28px;width:1.6px;height:533.44px"></div>
<div class="gl gv" style="left:1049.28px;top:333.28px;width:1.6px;height:533.44px"></div>
<div class="gl gv" style="left:1295.68px;top:333.28px;width:1.6px;height:533.44px"></div>
<div class="gl gv" style="left:1489.28px;top:333.28px;width:1.6px;height:533.44px"></div>
<div class="gl gv" style="left:1654.08px;top:333.28px;width:1.6px;height:533.44px"></div>
<div class="pg first" style="left:1652.96px;width:34.08px"><svg width="14" height="14" viewBox="0 0 14 14" style=""><path d="M1.6 6.2 A5.5 5.5 0 0 1 11.2 3.2" fill="none" stroke="#3d82f2" stroke-width="2"/><path d="M12.9 0.6 V5.2 H8.3 Z" fill="#3d82f2"/><path d="M12.4 7.8 A5.5 5.5 0 0 1 2.8 10.8" fill="none" stroke="#3d82f2" stroke-width="2"/><path d="M1.1 13.4 V8.8 H5.7 Z" fill="#3d82f2"/></svg></div>
<div class="pg" style="left:1687.04px;width:27.36px">«</div>
<div class="pg" style="left:1714.4px;width:24.96px">‹</div>
<div class="pg on" style="left:1739.36px;width:29.92px">1</div>
<div class="pg" style="left:1769.28px;width:28.32px">2</div>
<div class="pg" style="left:1797.6px;width:25.28px">›</div>
<div class="pg" style="left:1822.88px;width:27.52px">»</div>
<div class="pg tot last" style="left:1850.4px;width:53.6px">共2页</div>
<div class="corner"></div>
</div>
</body>
</html>
